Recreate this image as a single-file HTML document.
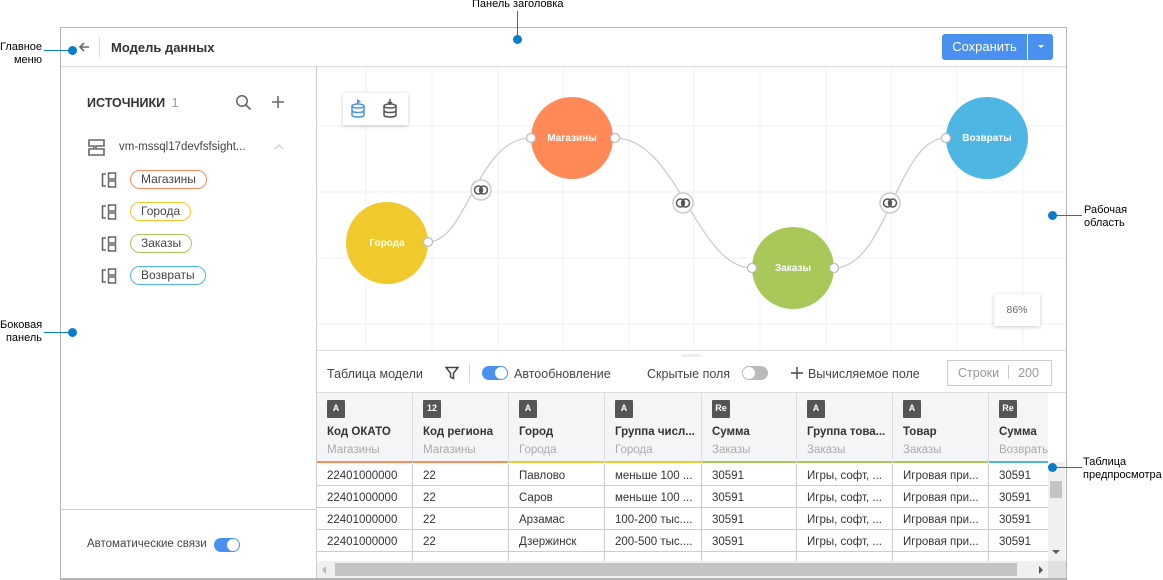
<!DOCTYPE html>
<html><head><meta charset="utf-8"><style>
*{box-sizing:border-box;margin:0;padding:0}
body{width:1163px;height:580px;position:relative;background:#fff;font-family:"Liberation Sans",sans-serif;overflow:hidden;color:#333}
.a{position:absolute}
.ann{position:absolute;font-size:11px;color:#000;line-height:13px}
.dot{position:absolute;width:9px;height:9px;border-radius:50%;background:#0a7ccc}
.ln{position:absolute;background:#0a7ccc}
.pill{position:absolute;height:19px;border-radius:10px;border:1px solid;font-size:12px;line-height:17px;padding:0 10px;color:#444;left:130px}
.src{position:absolute;left:101px;width:16px;height:16px}
.th{position:absolute;top:393px;height:70px;border-right:1px solid #ddd;background:#f4f5f7}
.th .ic{position:absolute;left:10px;top:7px;width:18px;height:18px;background:#555;color:#fff;font-size:9px;font-weight:bold;text-align:center;line-height:16px;border-radius:1px}
.th .t{position:absolute;left:10px;top:33px;font-size:11.5px;font-weight:bold;color:#333;white-space:nowrap}
.th .s{position:absolute;left:10px;top:51px;font-size:11.5px;color:#aaa;white-space:nowrap}
.th .b{position:absolute;left:0;right:0;bottom:0;height:2px}
.cell{position:absolute;height:22px;border-right:1px solid #ccc;border-bottom:1px solid #ccc;font-size:11.5px;line-height:21px;padding-left:10px;padding-top:2px;white-space:nowrap;overflow:hidden;color:#333}
.circ{position:absolute;width:82px;height:82px;border-radius:50%;color:#fff;font-size:10px;font-weight:bold;text-align:center;line-height:84px}
</style></head><body>
<div class="a" style="left:60px;top:27px;width:1007px;height:553px;border:1px solid #b5b5b5;border-bottom:none"></div>
<div class="a" style="left:61px;top:66px;width:1005px;height:1px;background:#ddd;box-shadow:0 1px 2px rgba(0,0,0,.08)"></div>
<svg class="a" style="left:77px;top:40px" width="14" height="14" viewBox="0 0 14 14"><path d="M12 7H3M7 3L3 7l4 4" stroke="#666" stroke-width="1.6" fill="none"/></svg>
<div class="a" style="left:99px;top:37px;width:1px;height:20px;background:#ddd"></div>
<div class="a" style="left:111px;top:40px;font-size:13px;font-weight:bold;color:#333">Модель данных</div>
<div class="a" style="left:942px;top:34px;width:85px;height:26px;background:#4a90ee;border-radius:3px 0 0 3px;color:#fff;font-size:13px;line-height:26px;text-align:center">Сохранить</div>
<div class="a" style="left:1028px;top:34px;width:25px;height:26px;background:#4a90ee;border-radius:0 3px 3px 0"></div>
<div class="a" style="left:1038px;top:45px;border-left:3px solid transparent;border-right:3px solid transparent;border-top:3px solid #fff"></div>
<div class="a" style="left:316px;top:67px;width:1px;height:513px;background:#ccc"></div>
<div class="a" style="left:87px;top:96px;font-size:12.5px;font-weight:bold;color:#333">ИСТОЧНИКИ <span style="font-weight:normal;color:#999;margin-left:3px">1</span></div>
<svg class="a" style="left:235px;top:94px" width="17" height="17" viewBox="0 0 17 17"><circle cx="7" cy="7" r="5.2" stroke="#666" stroke-width="1.5" fill="none"/><path d="M11 11l4.5 4.5" stroke="#666" stroke-width="1.6"/></svg>
<svg class="a" style="left:271px;top:95px" width="14" height="14"><path d="M7 1v12M1 7h12" stroke="#666" stroke-width="1.5"/></svg>
<svg class="a" style="left:88px;top:139px" width="18" height="17" viewBox="0 0 18 17"><path d="M1 1h15v6H8v3h8v6H1V10h5V7H1z" stroke="#666" stroke-width="1.6" fill="none"/></svg>
<div class="a" style="left:119px;top:141px;font-size:11.5px;color:#444">vm-mssql17devfsfsight...</div>
<svg class="a" style="left:274px;top:144px" width="10" height="6"><path d="M1 5l4-4 4 4" stroke="#ccc" stroke-width="1.3" fill="none"/></svg>
<svg class="src" style="top:172px" viewBox="0 0 16 16"><path d="M5 2H1.5v12H5" stroke="#666" stroke-width="1.6" fill="none"/><rect x="7.5" y="1" width="7" height="6" stroke="#666" stroke-width="1.5" fill="none"/><rect x="7.5" y="9" width="7" height="6" stroke="#666" stroke-width="1.5" fill="none"/></svg>
<svg class="src" style="top:204px" viewBox="0 0 16 16"><path d="M5 2H1.5v12H5" stroke="#666" stroke-width="1.6" fill="none"/><rect x="7.5" y="1" width="7" height="6" stroke="#666" stroke-width="1.5" fill="none"/><rect x="7.5" y="9" width="7" height="6" stroke="#666" stroke-width="1.5" fill="none"/></svg>
<svg class="src" style="top:236px" viewBox="0 0 16 16"><path d="M5 2H1.5v12H5" stroke="#666" stroke-width="1.6" fill="none"/><rect x="7.5" y="1" width="7" height="6" stroke="#666" stroke-width="1.5" fill="none"/><rect x="7.5" y="9" width="7" height="6" stroke="#666" stroke-width="1.5" fill="none"/></svg>
<svg class="src" style="top:268px" viewBox="0 0 16 16"><path d="M5 2H1.5v12H5" stroke="#666" stroke-width="1.6" fill="none"/><rect x="7.5" y="1" width="7" height="6" stroke="#666" stroke-width="1.5" fill="none"/><rect x="7.5" y="9" width="7" height="6" stroke="#666" stroke-width="1.5" fill="none"/></svg>
<div class="pill" style="top:170px;border-color:#ff8a5c">Магазины</div>
<div class="pill" style="top:202px;border-color:#f0c929">Города</div>
<div class="pill" style="top:234px;border-color:#a8c95a">Заказы</div>
<div class="pill" style="top:266px;border-color:#4db5e3">Возвраты</div>
<div class="a" style="left:61px;top:509px;width:255px;height:1px;background:#ccc"></div>
<div class="a" style="left:87px;top:538px;font-size:11.5px;color:#444">Автоматические связи</div>
<div class="a" style="left:214px;top:538px;width:26px;height:14px;border-radius:7px;background:#4a90ee"></div>
<div class="a" style="left:227px;top:539px;width:12px;height:12px;border-radius:50%;background:#fff"></div>
<svg class="a" style="left:317px;top:67px" width="749" height="283">
<g stroke="#f0f0f0" stroke-width="1">
<path d="M49 0v283M115 0v283M181 0v283M246 0v283M312 0v283M377 0v283M443 0v283M509 0v283M574 0v283M640 0v283M706 0v283"/>
<path d="M0 59h749M0 125h749M0 191h749M0 257h749"/>
</g>
<g stroke="#ccc" stroke-width="1.3" fill="none">
<path d="M111 175C150 175 160 71 214 71"/>
<path d="M298 71C360 71 380 201 435 201"/>
<path d="M517 201C570 201 580 71 629 71"/>
</g>
</svg>
<div class="circ" style="left:346px;top:202px;background:#f0c92d">Города</div>
<div class="circ" style="left:531px;top:97px;background:#ff8a57">Магазины</div>
<div class="circ" style="left:752px;top:227px;background:#a8c95a">Заказы</div>
<div class="circ" style="left:946px;top:97px;background:#4db6e3">Возвраты</div>
<svg class="a" style="left:0;top:0;pointer-events:none" width="1163" height="580">
<g fill="#fff" stroke="#bbb" stroke-width="1.2">
<circle cx="428" cy="242" r="4.5"/><circle cx="531" cy="138" r="4.5"/><circle cx="615" cy="138" r="4.5"/><circle cx="752" cy="268" r="4.5"/><circle cx="834" cy="268" r="4.5"/><circle cx="946" cy="138" r="4.5"/>
<circle cx="481" cy="190" r="10" stroke="#ccc" stroke-width="1.5"/><circle cx="683" cy="203" r="10" stroke="#ccc" stroke-width="1.5"/><circle cx="890" cy="203" r="10" stroke="#ccc" stroke-width="1.5"/>
</g>
<g fill="none" stroke="#555" stroke-width="1.5">
<circle cx="478.5" cy="190" r="4"/><circle cx="483.5" cy="190" r="4"/>
<circle cx="680.5" cy="203" r="4"/><circle cx="685.5" cy="203" r="4"/>
<circle cx="887.5" cy="203" r="4"/><circle cx="892.5" cy="203" r="4"/>
</g>
<path d="M481 187v6M683 200v6M890 200v6" stroke="#555" stroke-width="2"/>
</svg>
<div class="a" style="left:343px;top:93px;width:65px;height:32px;background:#fff;box-shadow:0 1px 4px rgba(0,0,0,.2)"></div>
<svg class="a" style="left:350px;top:99px" width="18" height="20" viewBox="0 0 18 20"><g stroke="#4a90ee" stroke-width="1.5" fill="none"><ellipse cx="8" cy="7" rx="6" ry="2"/><path d="M2 7v9c0 1.2 2.7 2 6 2s6-.8 6-2V7M2 11.5c0 1.2 2.7 2 6 2s6-.8 6-2"/></g><path d="M7 0v5l4-2.5z" fill="#4a90ee"/></svg>
<svg class="a" style="left:381px;top:99px" width="18" height="20" viewBox="0 0 18 20"><g stroke="#555" stroke-width="1.5" fill="none"><ellipse cx="9" cy="7" rx="6" ry="2"/><path d="M3 7v9c0 1.2 2.7 2 6 2s6-.8 6-2V7M3 11.5c0 1.2 2.7 2 6 2s6-.8 6-2M9 0v5M7 3l2 2 2-2"/></g></svg>
<div class="a" style="left:994px;top:294px;width:46px;height:32px;background:#fff;box-shadow:0 1px 4px rgba(0,0,0,.2);font-size:10.5px;color:#666;text-align:center;line-height:32px">86%</div>
<div class="a" style="left:317px;top:350px;width:749px;height:1px;background:#ddd"></div>
<div class="a" style="left:682px;top:354px;width:19px;height:3px;background:#eee;border-radius:2px"></div>
<div class="a" style="left:327px;top:367px;font-size:12.5px;color:#444">Таблица модели</div>
<svg class="a" style="left:445px;top:366px" width="14" height="14" viewBox="0 0 14 14"><path d="M1 1.5h12L8.5 7v5.5l-3-1.5V7z" stroke="#444" stroke-width="1.5" fill="none"/></svg>
<div class="a" style="left:469px;top:363px;width:1px;height:20px;background:#ddd"></div>
<div class="a" style="left:482px;top:366px;width:26px;height:14px;border-radius:7px;background:#4a90ee"></div>
<div class="a" style="left:495px;top:367px;width:12px;height:12px;border-radius:50%;background:#fff"></div>
<div class="a" style="left:514px;top:367px;font-size:12.5px;color:#444">Автообновление</div>
<div class="a" style="left:647px;top:367px;font-size:12.5px;color:#444">Скрытые поля</div>
<div class="a" style="left:742px;top:366px;width:26px;height:14px;border-radius:7px;background:#bbb"></div>
<div class="a" style="left:743px;top:367px;width:12px;height:12px;border-radius:50%;background:#fff"></div>
<svg class="a" style="left:791px;top:367px" width="12" height="12"><path d="M6 0v12M0 6h12" stroke="#444" stroke-width="1.4"/></svg>
<div class="a" style="left:808px;top:367px;font-size:12.5px;color:#444">Вычисляемое поле</div>
<div class="a" style="left:947px;top:360px;width:105px;height:26px;border:1px solid #ccc;font-size:12.5px;color:#999;line-height:25px;padding-left:10px">Строки<span style="display:inline-block;width:1px;height:14px;background:#ccc;margin:0 9px;vertical-align:-2px"></span>200</div>
<div class="a" style="left:317px;top:392px;width:749px;height:1px;background:#ddd"></div>
<div class="th" style="left:317px;width:96px"><div class="ic">A</div><div class="t">Код ОКАТО</div><div class="s">Магазины</div><div class="b" style="background:#ff8a57"></div></div>
<div class="th" style="left:413px;width:96px"><div class="ic">12</div><div class="t">Код региона</div><div class="s">Магазины</div><div class="b" style="background:#ff8a57"></div></div>
<div class="th" style="left:509px;width:96px"><div class="ic">A</div><div class="t">Город</div><div class="s">Города</div><div class="b" style="background:#f0c92d"></div></div>
<div class="th" style="left:605px;width:97px"><div class="ic">A</div><div class="t">Группа числ...</div><div class="s">Города</div><div class="b" style="background:#f0c92d"></div></div>
<div class="th" style="left:702px;width:95px"><div class="ic">Re</div><div class="t">Сумма</div><div class="s">Заказы</div><div class="b" style="background:#a8c95a"></div></div>
<div class="th" style="left:797px;width:96px"><div class="ic">A</div><div class="t">Группа това...</div><div class="s">Заказы</div><div class="b" style="background:#a8c95a"></div></div>
<div class="th" style="left:893px;width:96px"><div class="ic">A</div><div class="t">Товар</div><div class="s">Заказы</div><div class="b" style="background:#a8c95a"></div></div>
<div class="th" style="left:989px;width:59px;border-right:none;overflow:hidden"><div class="ic">Re</div><div class="t">Сумма</div><div class="s">Возвраты</div><div class="b" style="background:#4db6e3"></div></div>
<div id="rows"></div>
<script>
var cols=[[317,96],[413,96],[509,96],[605,97],[702,95],[797,96],[893,96],[989,59]];
var data=[["22401000000","22","Павлово","меньше 100 ...","30591","Игры, софт, ...","Игровая при...","30591"],
["22401000000","22","Саров","меньше 100 ...","30591","Игры, софт, ...","Игровая при...","30591"],
["22401000000","22","Арзамас","100-200 тыс....","30591","Игры, софт, ...","Игровая при...","30591"],
["22401000000","22","Дзержинск","200-500 тыс....","30591","Игры, софт, ...","Игровая при...","30591"],
["","","","","","","",""]];
var h="";
for(var r=0;r<5;r++)for(var c=0;c<8;c++){var hh=r==4?9:22;h+='<div class="cell" style="left:'+cols[c][0]+'px;top:'+(464+r*22)+'px;width:'+cols[c][1]+'px;height:'+hh+'px;'+(c==7?'border-right:none;':'')+(r==4?'border-bottom:none;':'')+'">'+data[r][c]+'</div>';}
document.getElementById('rows').innerHTML=h;
</script>
<div class="a" style="left:1048px;top:462px;width:17px;height:100px;background:#f0f0f0"></div>
<div class="a" style="left:1050px;top:481px;width:12px;height:17px;background:#c4c4c4"></div>
<div class="a" style="left:1052px;top:550px;border-left:4px solid transparent;border-right:4px solid transparent;border-top:4px solid #555"></div>
<div class="a" style="left:317px;top:561px;width:731px;height:17px;background:#f0f0f0"></div>
<div class="a" style="left:335px;top:563px;width:682px;height:13px;background:#c4c4c4"></div>
<div class="a" style="left:322px;top:566px;border-top:4px solid transparent;border-bottom:4px solid transparent;border-right:4px solid #bbb"></div>
<div class="a" style="left:1039px;top:566px;border-top:4px solid transparent;border-bottom:4px solid transparent;border-left:4px solid #555"></div>
<div class="a" style="left:1048px;top:561px;width:18px;height:17px;background:#e0e0e0"></div>
<div class="a" style="left:60px;top:578px;width:1007px;height:2px;background:#b5b5b5"></div>
<div class="ann" style="left:472px;top:-2px">Панель заголовка</div>
<div class="ln" style="left:517px;top:11px;width:1px;height:28px"></div>
<div class="dot" style="left:513px;top:35px"></div>
<div class="ann" style="left:0;top:41px;text-align:right;width:42px">Главное<br>меню</div>
<div class="ln" style="left:44px;top:50px;width:28px;height:1px"></div>
<div class="dot" style="left:68px;top:46px"></div>
<div class="ann" style="left:0;top:319px;text-align:right;width:42px">Боковая<br>панель</div>
<div class="ln" style="left:44px;top:332px;width:28px;height:1px"></div>
<div class="dot" style="left:68px;top:328px"></div>
<div class="ann" style="left:1084px;top:204px">Рабочая<br>область</div>
<div class="ln" style="left:1052px;top:215px;width:30px;height:1px"></div>
<div class="dot" style="left:1048px;top:211px"></div>
<div class="ann" style="left:1083px;top:456px">Таблица<br>предпросмотра</div>
<div class="ln" style="left:1052px;top:467px;width:30px;height:1px"></div>
<div class="dot" style="left:1048px;top:463px"></div>
</body></html>
